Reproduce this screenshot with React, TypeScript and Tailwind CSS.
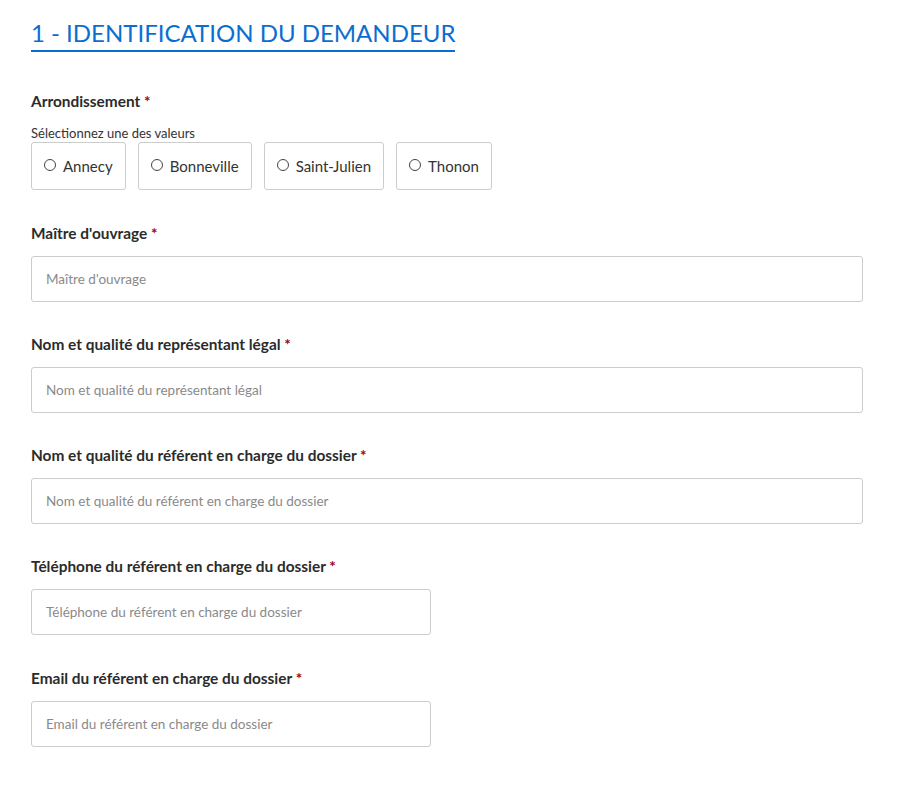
import React from "react";

const fields = [
  { label: "Maître d'ouvrage", wide: true },
  { label: "Nom et qualité du représentant légal", wide: true },
  { label: "Nom et qualité du référent en charge du dossier", wide: true },
  { label: "Téléphone du référent en charge du dossier", wide: false },
  { label: "Email du référent en charge du dossier", wide: false },
];

const villes = ["Annecy", "Bonneville", "Saint-Julien", "Thonon"];

function Label({ children }: { children: React.ReactNode }) {
  return (
    <label className="block text-[15.4px] font-bold leading-5 text-[#2b2b2b]">
      {children} <span className="text-[#a00020]">*</span>
    </label>
  );
}

export default function App() {
  return (
    <div className="min-h-screen bg-white px-[31px] pt-[18px] font-['Lato','Open_Sans',sans-serif] text-[#333]">
      {/* Titre */}
      <h1 className="inline-block border-b-2 border-[#0a6ed1] pb-[2px] text-[24px] leading-[30px] text-[#0a6ed1]">
        1 - IDENTIFICATION DU DEMANDEUR
      </h1>

      {/* Arrondissement */}
      <div className="mt-[39px]">
        <Label>Arrondissement</Label>
        <p className="mt-[14px] text-[13px] leading-4 text-[#333]">
          Sélectionnez une des valeurs
        </p>
        <div className="mt-[1px] flex gap-[12px]">
          {villes.map((v) => (
            <label
              key={v}
              className="flex h-[48px] items-center gap-[7px] rounded-[3px] border border-[#ccc] px-[12px] text-[15px] text-[#333]"
            >
              <span className="mb-[2px] h-[12px] w-[12px] rounded-full border border-[#444]" />
              {v}
            </label>
          ))}
        </div>
      </div>

      {/* Champs */}
      {fields.map((f, i) => (
        <div
          key={f.label}
          className={i === 0 || i === fields.length - 1 ? "mt-[33px]" : "mt-[32px]"}
        >
          <Label>{f.label}</Label>
          <input
            type="text"
            placeholder={f.label}
            className={`mt-[13px] block h-[46px] rounded-[3px] border border-[#ccc] px-[14px] text-[13.5px] text-[#333] outline-none placeholder:text-[#8a8a8a] ${
              f.wide ? "w-[832px]" : "w-[400px]"
            }`}
          />
        </div>
      ))}
    </div>
  );
}
